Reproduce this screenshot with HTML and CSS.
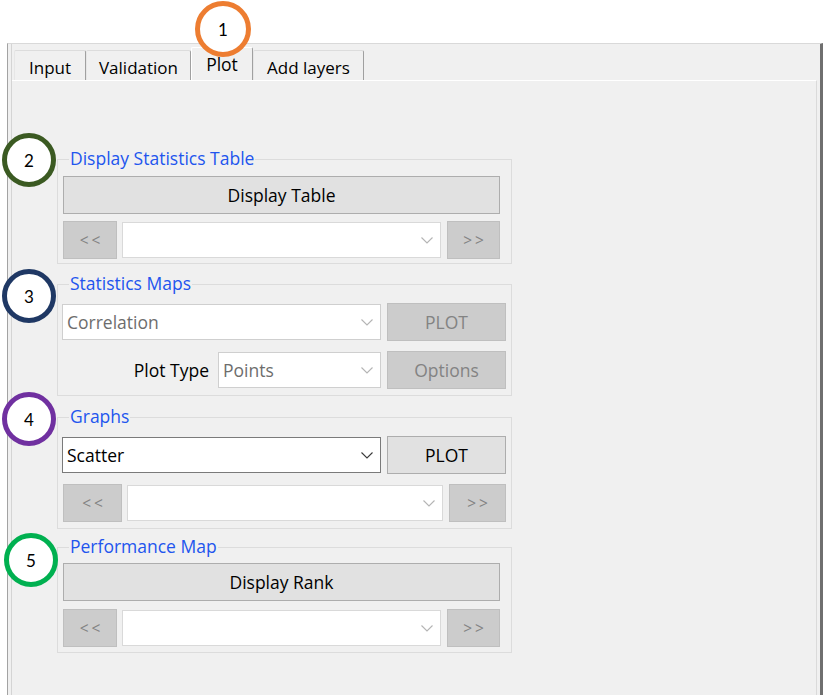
FILE: index.html
```html
<!DOCTYPE html>
<html>
<head>
<meta charset="utf-8">
<title>Plot tab</title>
<link rel="stylesheet" href="styles.css">
</head>
<body>
<div class="window">
  <div class="frame">
    <div class="tabstrip">
      <div class="tab t-input">Input</div>
      <div class="tab t-valid">Validation</div>
      <div class="tab t-plot active">Plot</div>
      <div class="tab t-add">Add layers</div>
    </div>
    <div class="panel">
      <fieldset class="group g-table">
        <legend>Display Statistics Table</legend>
        <div class="btn big">Display Table</div>
        <div class="nav-row">
          <div class="btn off nav">&lt;&lt;</div>
          <div class="combo"><span class="val"></span><svg class="chev" width="12" height="7" viewBox="0 0 12 7"><polyline points="0.5,0.5 6,6 11.5,0.5"/></svg></div>
          <div class="btn off nav">&gt;&gt;</div>
        </div>
      </fieldset>

      <fieldset class="group g-maps">
        <legend>Statistics Maps</legend>
        <div class="row-plot">
          <div class="combo off"><span class="val">Correlation</span><svg class="chev" width="12" height="7" viewBox="0 0 12 7"><polyline points="0.5,0.5 6,6 11.5,0.5"/></svg></div>
          <div class="btn off">PLOT</div>
        </div>
        <div class="row-type">
          <span class="label">Plot Type</span>
          <div class="combo off"><span class="val">Points</span><svg class="chev" width="12" height="7" viewBox="0 0 12 7"><polyline points="0.5,0.5 6,6 11.5,0.5"/></svg></div>
          <div class="btn off">Options</div>
        </div>
      </fieldset>

      <fieldset class="group g-graphs">
        <legend>Graphs</legend>
        <div class="row-plot">
          <div class="combo focus"><span class="val">Scatter</span><svg class="chev" width="12" height="7" viewBox="0 0 12 7"><polyline points="0.5,0.5 6,6 11.5,0.5"/></svg></div>
          <div class="btn">PLOT</div>
        </div>
        <div class="nav-row wide">
          <div class="btn off nav">&lt;&lt;</div>
          <div class="combo"><span class="val"></span><svg class="chev" width="12" height="7" viewBox="0 0 12 7"><polyline points="0.5,0.5 6,6 11.5,0.5"/></svg></div>
          <div class="btn off nav">&gt;&gt;</div>
        </div>
      </fieldset>

      <fieldset class="group g-perf">
        <legend>Performance Map</legend>
        <div class="btn big">Display Rank</div>
        <div class="nav-row">
          <div class="btn off nav">&lt;&lt;</div>
          <div class="combo"><span class="val"></span><svg class="chev" width="12" height="7" viewBox="0 0 12 7"><polyline points="0.5,0.5 6,6 11.5,0.5"/></svg></div>
          <div class="btn off nav">&gt;&gt;</div>
        </div>
      </fieldset>
    </div>
  </div>
</div>

<div class="badge b1">1</div>
<div class="badge b2">2</div>
<div class="badge b3">3</div>
<div class="badge b4">4</div>
<div class="badge b5">5</div>
</body>
</html>
```

FILE: styles.css
```css
* { box-sizing: border-box; }

html, body {
  margin: 0;
  padding: 0;
  background: #ffffff;
}

body {
  position: relative;
  width: 824px;
  height: 695px;
  overflow: hidden;
  font-family: "Open Sans", "Noto Sans", sans-serif;
  font-size: 17.5px;
  color: #000;
}

.window {
  margin: 43px 0 0 7px;
  width: 816px;
  height: 652px;
  background: #f0f0f0;
  border-top: 1px solid #d9d9d9;
  border-left: 1px solid #a3a3a3;
  border-right: 3px solid #6f6f6f;
  display: flex;
}

.frame {
  margin-left: 3px;
  flex: 1;
  border-left: 1px solid #d4d4d4;
  display: flex;
  flex-direction: column;
}

.tabstrip {
  height: 36px;
  padding: 3px 0 0 2px;
  display: flex;
  align-items: flex-end;
  font-size: 17px;
}

.tab {
  height: 30px;
  display: flex;
  align-items: center;
  justify-content: center;
  background: #f0f0f0;
  border-top: 1px solid #dcdcdc;
  border-left: 1px solid #e6e6e6;
  border-right: 1px solid #a0a0a0;
  border-radius: 2px 2px 0 0;
  line-height: 20px;
  padding-top: 4px;
}

.t-input { width: 72px; }
.t-valid { width: 105px; }
.t-plot { width: 62px; font-size: 17.5px; }
.t-add { width: 111px; }

.tab.active {
  height: 33px;
  border-top: 1px solid #ffffff;
  border-left: 1px solid #ffffff;
  padding-top: 1px;
  padding-bottom: 2px;
}

.panel {
  flex: 1;
  margin-right: 3px;
  border-top: 1px solid #ffffff;
  border-right: 1px solid #dadada;
  padding: 67px 0 0 45px;
}

/* group boxes */
.group {
  margin: 0;
  width: 455px;
  border: 1px solid #dcdcdc;
  padding: 6px 11px 4px 5px;
  min-width: 0;
}

.group legend {
  color: #2255ee;
  line-height: 20px;
  padding: 0 1px 2px;
  margin-left: 6px;
}

.g-maps { margin-top: 9px; padding: 8px 5px 6px 4px; }
.g-maps legend { margin-left: 7px; }
.g-graphs { margin-top: 10px; padding: 8px 5px 6px 4px; }
.g-graphs legend { margin-left: 7px; }
.g-perf { margin-top: 7px; padding: 5px 11px 5px 5px; }

/* buttons */
.btn {
  height: 38px;
  display: flex;
  align-items: center;
  justify-content: center;
  background: #e1e1e1;
  border: 1px solid #adadad;
  line-height: 20px;
  white-space: nowrap;
}

.btn.off {
  background: #cccccc;
  border-color: #bfbfbf;
  color: #838383;
}

.btn.nav {
  font-size: 15.5px;
  letter-spacing: 3px;
  padding-left: 3px;
}

.g-table .btn.big { margin-bottom: 7px; }
.g-perf .btn.big { margin-bottom: 8px; }

/* combo boxes */
.combo {
  height: 36px;
  align-self: center;
  background: #ffffff;
  border: 1px solid #d9d9d9;
  display: flex;
  align-items: center;
  padding: 0 7px 0 4px;
  line-height: 20px;
}

.combo .val { flex: 1; white-space: nowrap; }

.combo.off { border-color: #cfcfcf; color: #6d6d6d; }
.combo.focus { border-color: #7a7a7a; }

.chev polyline {
  fill: none;
  stroke: #b4b4b4;
  stroke-width: 1.1;
}
.combo.focus .chev polyline { stroke: #3a3a3a; }

/* rows */
.nav-row {
  display: grid;
  grid-template-columns: 53px 1fr 53px;
  column-gap: 6px;
}
.nav-row .btn:first-child { margin-right: -1px; }

.nav-row.wide {
  grid-template-columns: 58px 1fr 57px;
  padding-left: 1px;
}

.row-plot {
  display: grid;
  grid-template-columns: 1fr 119px;
  column-gap: 6px;
  margin-bottom: 10px;
}

.row-type {
  display: grid;
  grid-template-columns: 1fr 163px 119px;
  column-gap: 6px;
}

.label {
  align-self: center;
  text-align: right;
  padding-right: 3px;
  line-height: 20px;
}

/* annotation circles */
.badge {
  position: absolute;
  width: 54px;
  height: 54px;
  border-radius: 50%;
  border: 5px solid #000;
  background: #ffffff;
  display: flex;
  align-items: center;
  justify-content: center;
  font-family: Lato, "Open Sans", sans-serif;
  font-size: 17px;
  color: #000;
}

.b1 { left: 195px; top: 1px; width: 56px; height: 56px; border-color: #ed7d31; }
.b2 { left: 2px; top: 133px; border-color: #3b5a22; }
.b3 { left: 2px; top: 269px; border-color: #1f3864; }
.b4 { left: 2px; top: 392px; border-color: #7030a0; }
.b5 { left: 4px; top: 533px; border-color: #00b050; }
```
